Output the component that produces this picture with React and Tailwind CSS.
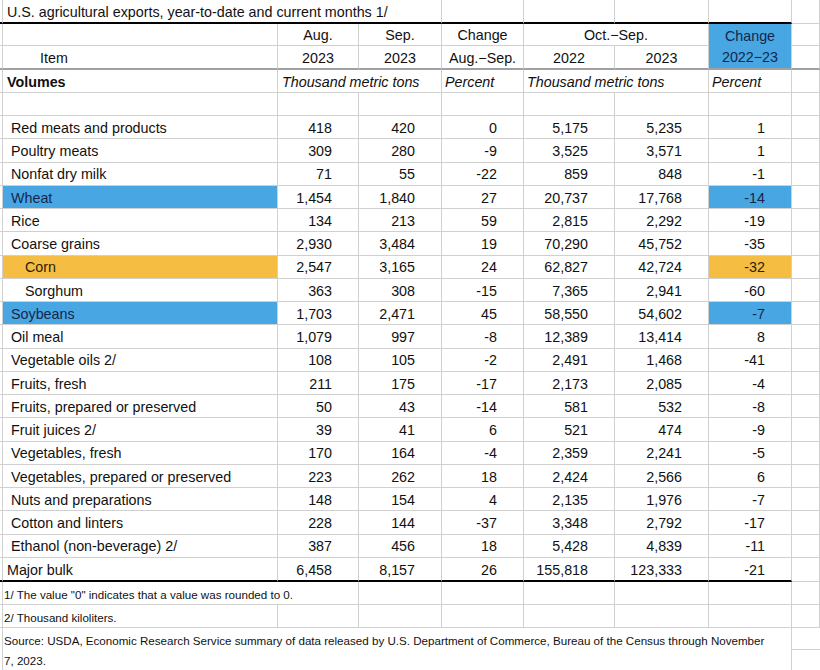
import clsx from "clsx";

const rows = [
  { name: "Red meats and products", v: ["418", "420", "0", "5,175", "5,235", "1"] },
  { name: "Poultry meats", v: ["309", "280", "-9", "3,525", "3,571", "1"] },
  { name: "Nonfat dry milk", v: ["71", "55", "-22", "859", "848", "-1"] },
  { name: "Wheat", v: ["1,454", "1,840", "27", "20,737", "17,768", "-14"], hl: "blue" },
  { name: "Rice", v: ["134", "213", "59", "2,815", "2,292", "-19"] },
  { name: "Coarse grains", v: ["2,930", "3,484", "19", "70,290", "45,752", "-35"] },
  { name: "Corn", v: ["2,547", "3,165", "24", "62,827", "42,724", "-32"], hl: "orange", sub: true },
  { name: "Sorghum", v: ["363", "308", "-15", "7,365", "2,941", "-60"], sub: true },
  { name: "Soybeans", v: ["1,703", "2,471", "45", "58,550", "54,602", "-7"], hl: "blue" },
  { name: "Oil meal", v: ["1,079", "997", "-8", "12,389", "13,414", "8"] },
  { name: "Vegetable oils 2/", v: ["108", "105", "-2", "2,491", "1,468", "-41"] },
  { name: "Fruits, fresh", v: ["211", "175", "-17", "2,173", "2,085", "-4"] },
  { name: "Fruits, prepared or preserved", v: ["50", "43", "-14", "581", "532", "-8"] },
  { name: "Fruit juices 2/", v: ["39", "41", "6", "521", "474", "-9"] },
  { name: "Vegetables, fresh", v: ["170", "164", "-4", "2,359", "2,241", "-5"] },
  { name: "Vegetables, prepared or preserved", v: ["223", "262", "18", "2,424", "2,566", "6"] },
  { name: "Nuts and preparations", v: ["148", "154", "4", "2,135", "1,976", "-7"] },
  { name: "Cotton and linters", v: ["228", "144", "-37", "3,348", "2,792", "-17"] },
  { name: "Ethanol (non-beverage) 2/", v: ["387", "456", "18", "5,428", "4,839", "-11"] },
  { name: "Major bulk", v: ["6,458", "8,157", "26", "155,818", "123,333", "-21"], last: true },
];

const hlBg = {
  blue: "bg-[#48a6e3] text-[#14264a]",
  orange: "bg-[#f5bd41] text-[#2a1f08]",
};

function Cell({ className, children }) {
  return (
    <div
      className={clsx(
        "flex items-center pt-[3px] whitespace-nowrap overflow-hidden border-r border-b border-[#d0d0d0]",
        className
      )}
    >
      {children}
    </div>
  );
}

export default function App() {
  return (
    <div className="w-[820px] h-[670px] overflow-hidden bg-white text-[#111] font-['Liberation_Sans',Arial,sans-serif] text-[14.3px]">
      <div className="grid grid-cols-[3px_275px_81px_83px_82px_91px_94px_83px_28px] grid-rows-[24px_22px_24px_23px_23px_repeat(19,23.25px)_24.25px_23px_23px_42px]">
        {/* title row */}
        <Cell className="border-b-2 border-b-black" />
        <Cell className="col-span-3 pl-1 border-b-2 border-b-black">
          U.S. agricultural exports, year-to-date and current months 1/
        </Cell>
        <Cell className="border-b-2 border-b-black" />
        <Cell className="border-b-2 border-b-black" />
        <Cell className="border-b-2 border-b-black" />
        <Cell className="border-b-2 border-b-black" />
        <Cell />

        {/* header row 1 */}
        <Cell />
        <Cell />
        <Cell className="justify-center">Aug.</Cell>
        <Cell className="justify-center">Sep.</Cell>
        <Cell className="justify-center">Change</Cell>
        <Cell className="col-span-2 justify-center">Oct.−Sep.</Cell>
        <div className="row-span-2 flex flex-col pt-[2px] border-r border-[#d0d0d0] border-b-2 border-b-[#a0a0a0] bg-[#48a6e3] text-[#14264a]">
          <div className="h-[22px] flex items-center justify-center">Change</div>
          <div className="h-[22px] flex items-center justify-center">2022−23</div>
        </div>
        <Cell />

        {/* header row 2 */}
        <Cell className="border-b-2 border-b-[#a0a0a0]" />
        <Cell className="pl-[37px] border-b-2 border-b-[#a0a0a0]">Item</Cell>
        <Cell className="justify-center border-b-2 border-b-[#a0a0a0]">2023</Cell>
        <Cell className="justify-center border-b-2 border-b-[#a0a0a0]">2023</Cell>
        <Cell className="justify-center border-b-2 border-b-[#a0a0a0]">Aug.−Sep.</Cell>
        <Cell className="justify-center border-b-2 border-b-[#a0a0a0]">2022</Cell>
        <Cell className="justify-center border-b-2 border-b-[#a0a0a0]">2023</Cell>
        <Cell className="border-b-2 border-b-[#a0a0a0]" />

        {/* units row */}
        <Cell />
        <Cell className="pl-1 font-bold">Volumes</Cell>
        <Cell className="col-span-2 pl-[4px] italic">Thousand metric tons</Cell>
        <Cell className="pl-[3px] italic">Percent</Cell>
        <Cell className="col-span-2 pl-[3px] italic">Thousand metric tons</Cell>
        <Cell className="pl-[3px] italic">Percent</Cell>
        <Cell />

        {/* blank row */}
        {Array.from({ length: 9 }).map((_, i) => (
          <Cell key={"b" + i} />
        ))}

        {/* data rows */}
        {rows.map((r) => {
          const bottom = r.last ? "border-b-2 border-b-black" : "";
          return [
            <Cell key={r.name + "s"} className={bottom} />,
            <Cell
              key={r.name + "n"}
              className={clsx(
                bottom,
                r.hl && hlBg[r.hl],
                r.sub ? "pl-[22px]" : r.last ? "pl-1" : "pl-2"
              )}
            >
              {r.name}
            </Cell>,
            ...r.v.map((val, i) => (
              <Cell
                key={r.name + i}
                className={clsx(
                  "justify-end pr-[26px]",
                  bottom,
                  i === 5 && r.hl && hlBg[r.hl]
                )}
              >
                {val}
              </Cell>
            )),
            <Cell key={r.name + "x"} />,
          ];
        })}

        {/* footnotes */}
        <Cell />
        <Cell className="col-span-2 pl-px text-[11.6px]">
          1/ The value "0" indicates that a value was rounded to 0.
        </Cell>
        <Cell />
        <Cell />
        <Cell />
        <Cell />
        <Cell />
        <Cell />

        <Cell />
        <Cell className="pl-px text-[11.6px]">2/ Thousand kiloliters.</Cell>
        <Cell />
        <Cell />
        <Cell />
        <Cell />
        <Cell />
        <Cell />
        <Cell />

        <div className="border-r border-[#d0d0d0]" />
        <div className="col-span-7 border-r border-[#d0d0d0] pl-px pt-[3px] text-[11.6px] leading-[20px] whitespace-nowrap">
          Source: USDA, Economic Research Service summary of data released by U.S. Department of Commerce, Bureau of the Census through November
          <br />
          7, 2023.
        </div>
        <div>
          <div className="h-[22px] border-b border-[#d0d0d0]" />
        </div>
      </div>
    </div>
  );
}
